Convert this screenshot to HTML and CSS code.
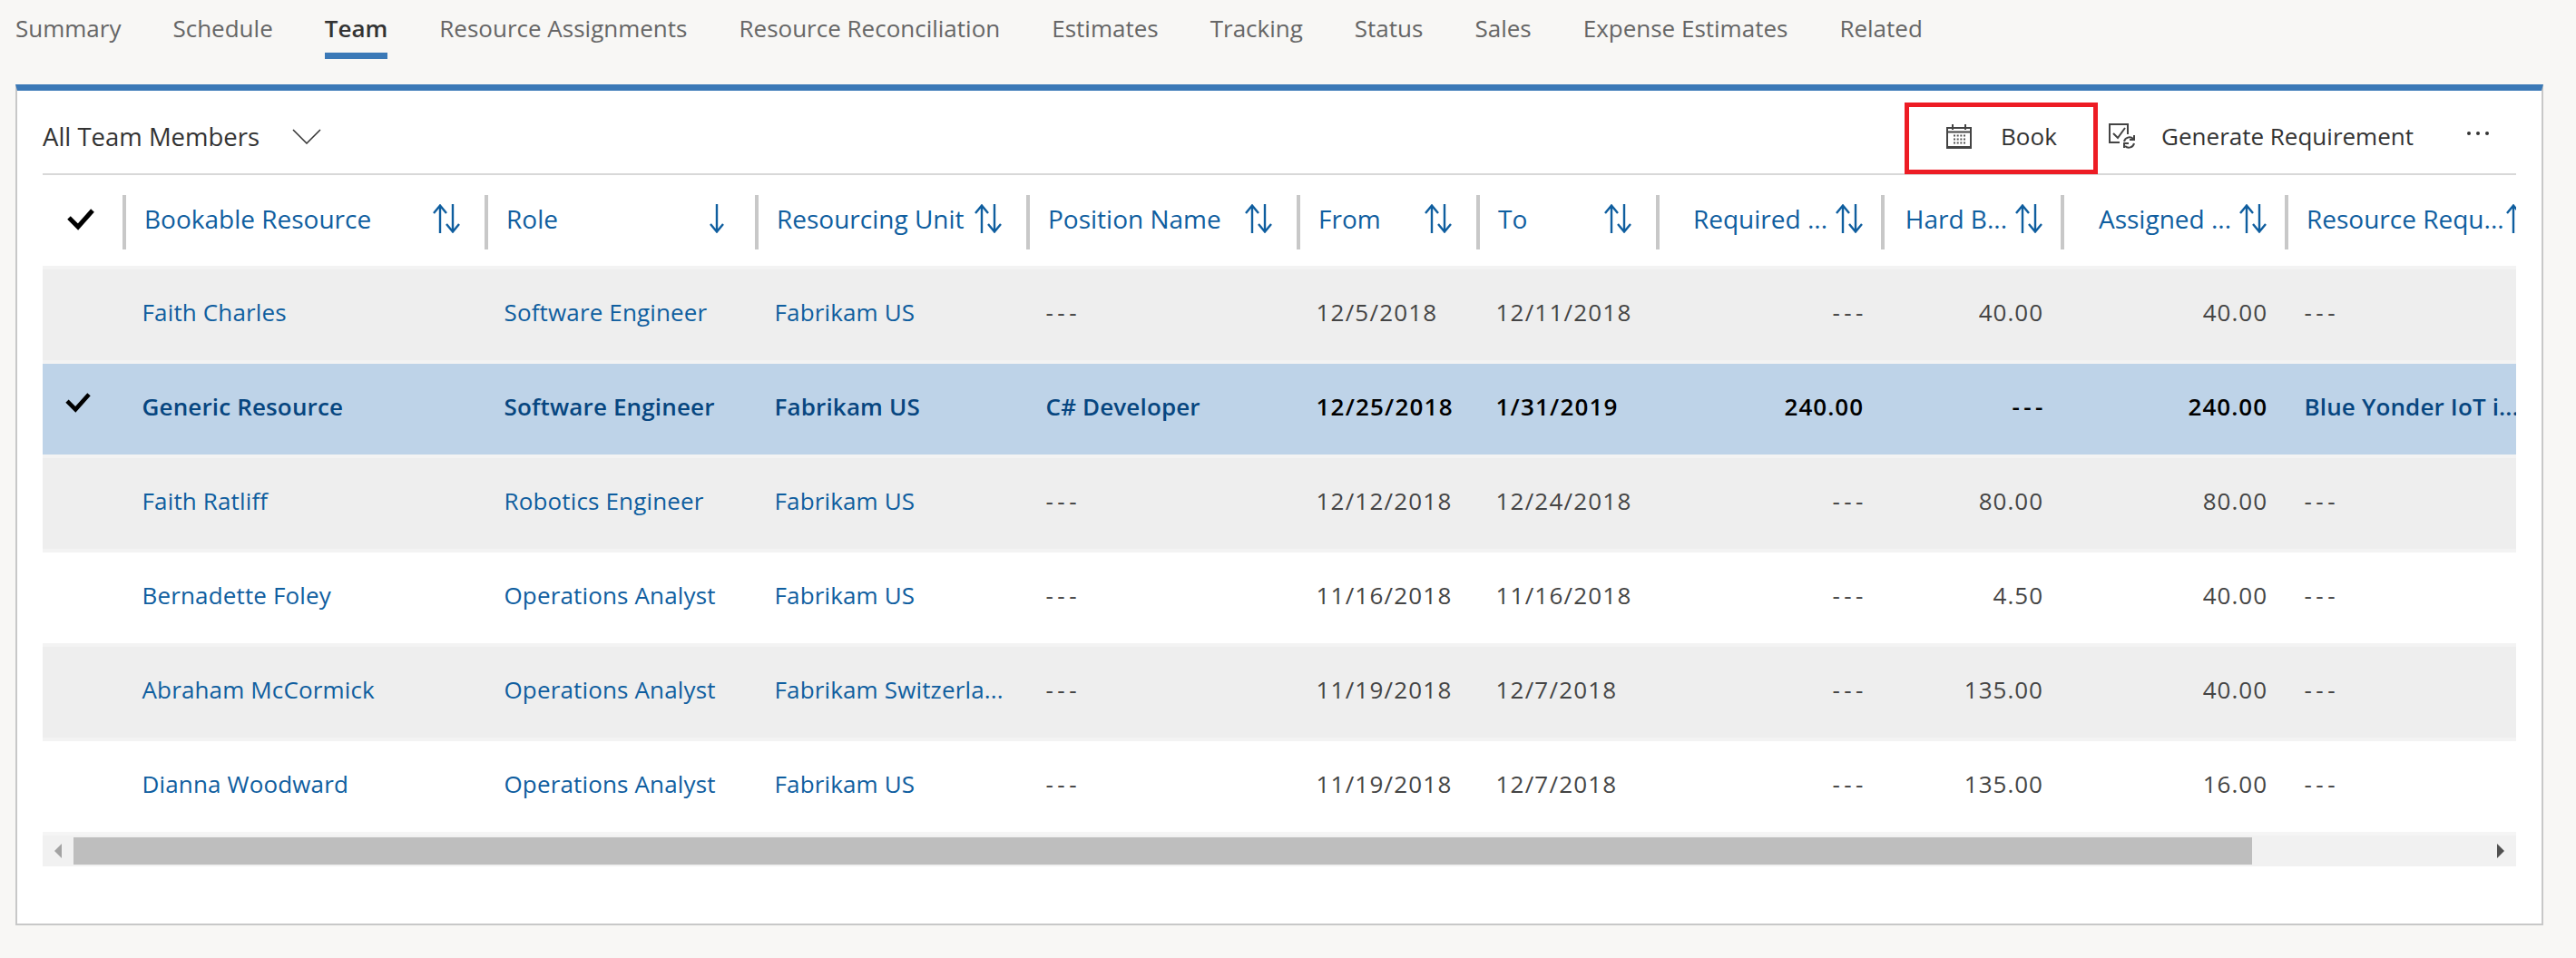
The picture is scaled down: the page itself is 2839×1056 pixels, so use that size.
FILE: index.html
```html
<!DOCTYPE html>
<html lang="en">
<head>
    <meta charset="UTF-8">
    <title>Team</title>
    <link rel="stylesheet" href="styles.css">
</head>
<body>
    <svg class="sprites" width="0" height="0">
        <symbol id="sort" viewBox="0 0 30 32">
            <path d="M8 32V1.500M1 10l7-8.500 7 8.500M22 0v30.500M15 22l7 8.500 7-8.500" fill="none" stroke="currentColor" stroke-width="2.400"/>
        </symbol>
        <symbol id="down" viewBox="0 0 16 32">
            <path d="M8 0v30.500M1 22l7 8.500 7-8.500" fill="none" stroke="currentColor" stroke-width="2.400"/>
        </symbol>
        <symbol id="up" viewBox="0 0 16 32">
            <path d="M8 32V1.500M1 10l7-8.500 7 8.500" fill="none" stroke="currentColor" stroke-width="2.400"/>
        </symbol>
        <symbol id="check" viewBox="0 0 30 26">
            <path d="M2 12l10 10L28 4" fill="none" stroke="currentColor" stroke-width="5"/>
        </symbol>
    </svg>

    <nav class="tabs">
        <a class="tab">Summary</a>
        <a class="tab">Schedule</a>
        <a class="tab active">Team</a>
        <a class="tab">Resource Assignments</a>
        <a class="tab">Resource Reconciliation</a>
        <a class="tab">Estimates</a>
        <a class="tab">Tracking</a>
        <a class="tab">Status</a>
        <a class="tab">Sales</a>
        <a class="tab">Expense Estimates</a>
        <a class="tab">Related</a>
    </nav>

    <section class="panel">
        <div class="toolbar">
            <div class="view-name">All Team Members
                <svg class="chevron" width="32" height="17" viewBox="0 0 32 17"><path d="M1 1l15 15L31 1" fill="none" stroke="#333" stroke-width="1.500"/></svg>
            </div>
            <div class="commands">
                <button class="command book">
                    <svg width="28" height="27" viewBox="0 0 28 27">
                        <path d="M1 4h26v21H1zM1 8.500h26" fill="none" stroke="#444" stroke-width="2"/>
                        <path d="M7 0v6M21 0v6M0 26h28" stroke="#444" stroke-width="2"/>
                        <path d="M8 12.500h13M8 16.500h13M8 20.500h13" stroke="#555" stroke-width="2" stroke-dasharray="2 1.670"/>
                    </svg>
                    Book
                </button>
                <button class="command generate">
                    <svg width="30" height="28" viewBox="0 0 30 28">
                        <path d="M21 12V1H1v20h11" fill="none" stroke="#444" stroke-width="2"/>
                        <path d="M5 11l5 5 8-11" fill="none" stroke="#444" stroke-width="2"/>
                        <path d="M17 20a6 6 0 0 1 10-3M28 22a6 6 0 0 1-10 3M28 13v5h-5M17 27v-5h5" fill="none" stroke="#444" stroke-width="2"/>
                    </svg>
                    Generate Requirement
                </button>
                <button class="command more">
                    <span class="dot"></span><span class="dot"></span><span class="dot"></span>
                </button>
            </div>
        </div>

        <div class="grid">
            <div class="row head">
                <div class="cell check-cell"><svg width="30" height="26"><use href="#check"/></svg></div>
                <div class="cell"><span class="label">Bookable Resource</span><svg class="sort" width="30" height="32"><use href="#sort"/></svg></div>
                <div class="cell"><span class="label">Role</span><svg class="sort one" width="16" height="32"><use href="#down"/></svg></div>
                <div class="cell"><span class="label">Resourcing Unit</span><svg class="sort" width="30" height="32"><use href="#sort"/></svg></div>
                <div class="cell"><span class="label">Position Name</span><svg class="sort" width="30" height="32"><use href="#sort"/></svg></div>
                <div class="cell"><span class="label">From</span><svg class="sort" width="30" height="32"><use href="#sort"/></svg></div>
                <div class="cell"><span class="label">To</span><svg class="sort" width="30" height="32"><use href="#sort"/></svg></div>
                <div class="cell end"><span class="label">Required ...</span><svg class="sort" width="30" height="32"><use href="#sort"/></svg></div>
                <div class="cell end"><span class="label">Hard B...</span><svg class="sort" width="30" height="32"><use href="#sort"/></svg></div>
                <div class="cell end"><span class="label">Assigned ...</span><svg class="sort" width="30" height="32"><use href="#sort"/></svg></div>
                <div class="cell last"><span class="label">Resource Requ...</span><svg class="sort one" width="16" height="32"><use href="#up"/></svg></div>
            </div>

            <div class="row shaded">
                <div class="cell check-cell"></div>
                <div class="cell link">Faith Charles</div>
                <div class="cell link">Software Engineer</div>
                <div class="cell link">Fabrikam US</div>
                <div class="cell empty">---</div>
                <div class="cell date">12/5/2018</div>
                <div class="cell date">12/11/2018</div>
                <div class="cell num empty">---</div>
                <div class="cell num">40.00</div>
                <div class="cell num">40.00</div>
                <div class="cell empty">---</div>
            </div>
            <div class="row selected">
                <div class="cell check-cell"><svg width="28" height="24"><use href="#check"/></svg></div>
                <div class="cell link">Generic Resource</div>
                <div class="cell link">Software Engineer</div>
                <div class="cell link">Fabrikam US</div>
                <div class="cell link">C# Developer</div>
                <div class="cell date">12/25/2018</div>
                <div class="cell date">1/31/2019</div>
                <div class="cell num">240.00</div>
                <div class="cell num empty">---</div>
                <div class="cell num">240.00</div>
                <div class="cell link">Blue Yonder IoT i...</div>
            </div>
            <div class="row shaded">
                <div class="cell check-cell"></div>
                <div class="cell link">Faith Ratliff</div>
                <div class="cell link">Robotics Engineer</div>
                <div class="cell link">Fabrikam US</div>
                <div class="cell empty">---</div>
                <div class="cell date">12/12/2018</div>
                <div class="cell date">12/24/2018</div>
                <div class="cell num empty">---</div>
                <div class="cell num">80.00</div>
                <div class="cell num">80.00</div>
                <div class="cell empty">---</div>
            </div>
            <div class="row">
                <div class="cell check-cell"></div>
                <div class="cell link">Bernadette Foley</div>
                <div class="cell link">Operations Analyst</div>
                <div class="cell link">Fabrikam US</div>
                <div class="cell empty">---</div>
                <div class="cell date">11/16/2018</div>
                <div class="cell date">11/16/2018</div>
                <div class="cell num empty">---</div>
                <div class="cell num">4.50</div>
                <div class="cell num">40.00</div>
                <div class="cell empty">---</div>
            </div>
            <div class="row shaded">
                <div class="cell check-cell"></div>
                <div class="cell link">Abraham McCormick</div>
                <div class="cell link">Operations Analyst</div>
                <div class="cell link">Fabrikam Switzerla...</div>
                <div class="cell empty">---</div>
                <div class="cell date">11/19/2018</div>
                <div class="cell date">12/7/2018</div>
                <div class="cell num empty">---</div>
                <div class="cell num">135.00</div>
                <div class="cell num">40.00</div>
                <div class="cell empty">---</div>
            </div>
            <div class="row">
                <div class="cell check-cell"></div>
                <div class="cell link">Dianna Woodward</div>
                <div class="cell link">Operations Analyst</div>
                <div class="cell link">Fabrikam US</div>
                <div class="cell empty">---</div>
                <div class="cell date">11/19/2018</div>
                <div class="cell date">12/7/2018</div>
                <div class="cell num empty">---</div>
                <div class="cell num">135.00</div>
                <div class="cell num">16.00</div>
                <div class="cell empty">---</div>
            </div>
        </div>

        <div class="scrollbar">
            <span class="arrow left"></span>
            <div class="thumb"></div>
            <span class="arrow right"></span>
        </div>
    </section>
</body>
</html>
```

FILE: styles.css
```css
* {
    box-sizing: border-box;
}
body {
    margin: 0;
    height: 1056px;
    overflow: hidden;
    background-color: #f8f7f5;
    font-family: "Open Sans", "Liberation Sans", sans-serif;
    font-size: 26px;
    color: #444;
}
.sprites {
    display: block;
}
.tabs {
    display: flex;
    gap: 57px;
    height: 93px;
    padding: 11px 0 0 17px;
}
.tab {
    height: 54px;
    line-height: 40px;
    color: #666;
    border-bottom: 0 solid #3b79b7;
}
.tab.active {
    color: #333;
    font-weight: 600;
    border-bottom-width: 7px;
}
.panel {
    width: 2786px;
    height: 927px;
    margin-left: 17px;
    padding: 0 28px;
    background: white;
    border: 2px solid #c8c8c8;
    border-top: 7px solid #3b79b7;
}
.toolbar {
    display: flex;
    justify-content: space-between;
    align-items: flex-start;
    height: 93px;
    padding-top: 13px;
    border-bottom: 2px solid #d8d8d8;
}
.view-name {
    display: flex;
    align-items: center;
    gap: 36px;
    height: 74px;
    font-size: 27.500px;
    color: #333;
}
.commands {
    display: flex;
    align-items: stretch;
    height: 79px;
}
.command {
    display: flex;
    align-items: center;
    padding: 0 0 5px;
    border: none;
    background: none;
    font: inherit;
    color: #333;
}
.book {
    width: 213px;
    padding-left: 41px;
    gap: 32px;
    border: 5px solid #ed1c24;
}
.generate {
    padding-left: 12px;
    gap: 28px;
}
.more {
    gap: 6px;
    margin-left: 59px;
    margin-right: 30px;
    padding-bottom: 11px;
}
.dot {
    width: 4px;
    height: 4px;
    border-radius: 50%;
    background: #333;
}
.row {
    display: grid;
    grid-template-columns: 88px 399px 298px 299px 298px 198px 198px 248px 198px 247px 255px;
    height: 104px;
    padding-bottom: 7px;
    align-items: center;
    border-top: 4px solid #f3f3f3;
}
.row.head {
    height: 100px;
    padding-bottom: 0;
    border-top: none;
    align-items: start;
    font-size: 28px;
    color: #0f5e9f;
}
.cell {
    padding-left: 21.500px;
    white-space: nowrap;
    overflow: hidden;
}
.head .cell {
    display: flex;
    align-items: center;
    justify-content: space-between;
    height: 60px;
    margin-top: 22px;
    padding: 0 27px 8px 20px;
    border-left: 4px solid #c8c8c8;
    overflow: visible;
}
.head .cell.check-cell {
    border-left: none;
    padding: 0 0 8px 27px;
    color: black;
}
.head .cell.end {
    justify-content: flex-end;
    gap: 9px;
    padding-right: 20px;
}
.head .cell.last {
    justify-content: flex-start;
    gap: 2px;
    padding-right: 0;
    overflow: hidden;
}
.sort {
    flex-shrink: 0;
}
.sort.one {
    margin-right: 7px;
}
.last .sort.one {
    margin-right: 0;
}
.label {
    color: #0f5e9f;
}
.date {
    letter-spacing: 1.200px;
}
.num {
    text-align: right;
    padding-right: 19px;
    letter-spacing: 1px;
}
.empty {
    letter-spacing: 4.500px;
}
.num.empty {
    padding-right: 15px;
}
.row.shaded {
    background-color: #eee;
}
.row.selected {
    background-color: #bed3e8;
    font-weight: 600;
    color: black;
}
.link {
    color: #0f5e9f;
    letter-spacing: 0.150px;
}
.selected .link {
    color: #074680;
}
.check-cell {
    padding: 0 0 9px 25px;
    color: black;
    line-height: 0;
}
.scrollbar {
    display: flex;
    align-items: center;
    height: 38px;
    padding: 0 13px;
    background: #f1f1f1;
    border-top: 4px solid #f5f5f5;
}
.thumb {
    flex: 1;
    height: 30px;
    margin: 0 270px 0 13px;
    background: #bebebe;
}
.arrow {
    width: 0;
    height: 0;
    border-top: 8px solid transparent;
    border-bottom: 8px solid transparent;
}
.arrow.left {
    border-right: 8px solid #a3a3a3;
}
.arrow.right {
    border-left: 8px solid #505050;
}
```
